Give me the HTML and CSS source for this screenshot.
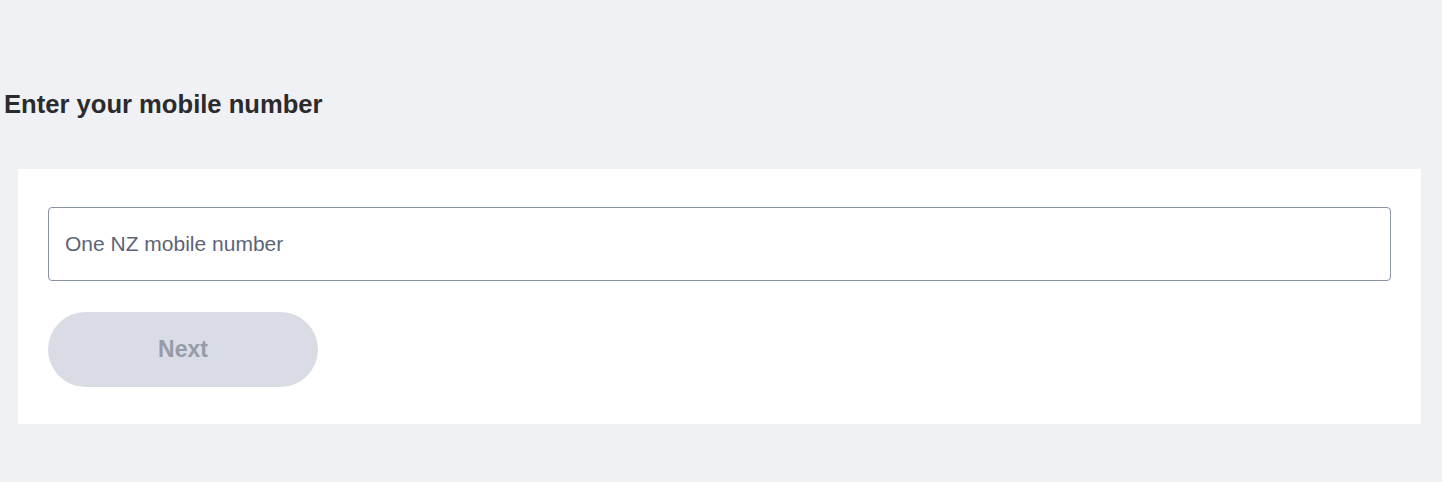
FILE: index.html
```html
<!DOCTYPE html>
<html lang="en">
<head>
<meta charset="utf-8">
<title>Enter your mobile number</title>
<link rel="stylesheet" href="styles.css">
</head>
<body>
  <main class="page">
    <h1 class="title">Enter your mobile number</h1>
    <form class="card">
      <input class="field" type="tel" placeholder="One NZ mobile number">
      <button class="btn" type="button" disabled>Next</button>
    </form>
  </main>
</body>
</html>
```

FILE: styles.css
```css
html, body {
  margin: 0;
  padding: 0;
  background: #f0f1f5;
}
body {
  font-family: "Liberation Sans", Arial, sans-serif;
  height: 482px;
  overflow: hidden;
}
.page {
  padding-top: 88px;
}
.title {
  margin: 0 0 0 4px;
  font-size: 25.6px;
  line-height: 32px;
  font-weight: 700;
  color: #2b2b2e;
}
.card {
  margin: 49px 0 0 18px;
  width: 1403px;
  box-sizing: border-box;
  background: #ffffff;
  padding: 38px 30px 37px;
  display: flex;
  flex-direction: column;
  align-items: flex-start;
  gap: 31px;
}
.field {
  box-sizing: border-box;
  width: 100%;
  height: 74px;
  margin: 0;
  border: 1px solid #8a92a6;
  border-radius: 4px;
  padding: 0 16px;
  font-family: inherit;
  font-size: 21px;
  color: #2b2b2e;
  background: #fff;
  outline: none;
}
.field::placeholder {
  color: #5c6478;
  opacity: 1;
}
.btn {
  width: 270px;
  height: 75px;
  margin: 0;
  border: none;
  border-radius: 38px;
  background: #d9dce5;
  color: #979ba8;
  font-family: inherit;
  font-size: 23px;
  font-weight: 700;
  padding: 0;
}
```
